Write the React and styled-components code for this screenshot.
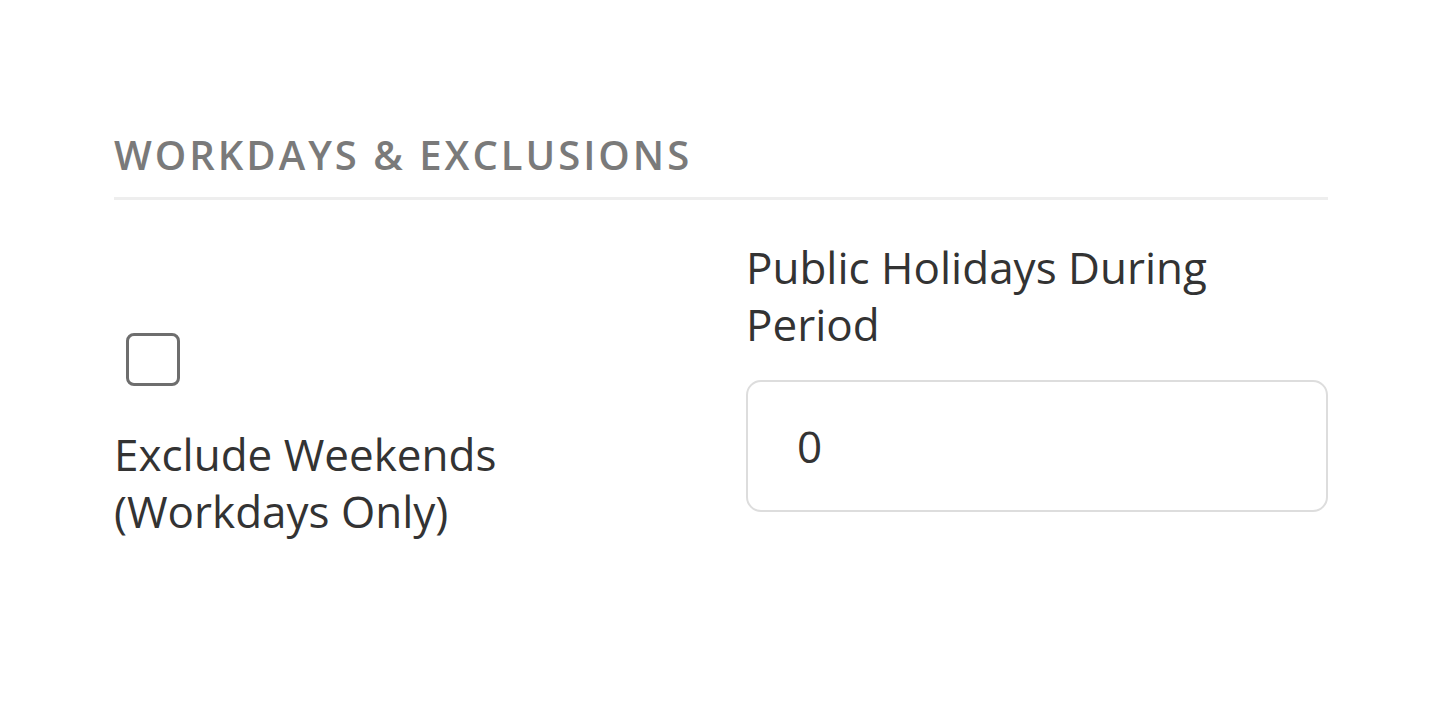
import React from "react";
import styled, { createGlobalStyle } from "styled-components";

const GlobalStyle = createGlobalStyle`
  body {
    margin: 0;
    background: #ffffff;
    font-family: "Open Sans", "Noto Sans", sans-serif;
    color: #333333;
  }
`;

const Page = styled.div`
  padding: 127px 122px 0 114px;
`;

const Section = styled.section`
  display: flex;
  flex-direction: column;
`;

const Heading = styled.h3`
  margin: 0;
  padding-bottom: 15px;
  font-size: 40px;
  font-weight: 600;
  letter-spacing: 3px;
  text-transform: uppercase;
  color: #7a7a7a;
  border-bottom: 3px solid #eeeeee;
`;

const Grid = styled.div`
  display: grid;
  grid-template-columns: 1fr 1fr;
  column-gap: 50px;
  padding-top: 39px;
`;

const Field = styled.div`
  display: flex;
  flex-direction: column;
  align-items: flex-start;
  gap: ${(p) => p.$gap || "0px"};
  padding-top: ${(p) => p.$offset || "0px"};
`;

const Box = styled.span`
  display: block;
  width: 54px;
  height: 53px;
  margin-left: 12px;
  border: 3px solid #6e6e6e;
  border-radius: 8px;
  box-sizing: border-box;
`;

const Label = styled.label`
  font-size: 44px;
  line-height: 57px;
  color: #333333;
`;

const Input = styled.div`
  box-sizing: border-box;
  width: 100%;
  height: 132px;
  display: flex;
  align-items: center;
  padding-left: 49px;
  border: 2px solid #dddddd;
  border-radius: 15px;
  font-size: 44px;
  color: #333333;
`;

export default function App() {
  return (
    <>
      <GlobalStyle />
      <Page>
        <Section>
          <Heading>Workdays &amp; Exclusions</Heading>
          <Grid>
            <Field $offset="94px" $gap="40px">
              <Box />
              <Label>
                Exclude Weekends
                <br />
                (Workdays Only)
              </Label>
            </Field>
            <Field $gap="27px">
              <Label>
                Public Holidays During
                <br />
                Period
              </Label>
              <Input>0</Input>
            </Field>
          </Grid>
        </Section>
      </Page>
    </>
  );
}
